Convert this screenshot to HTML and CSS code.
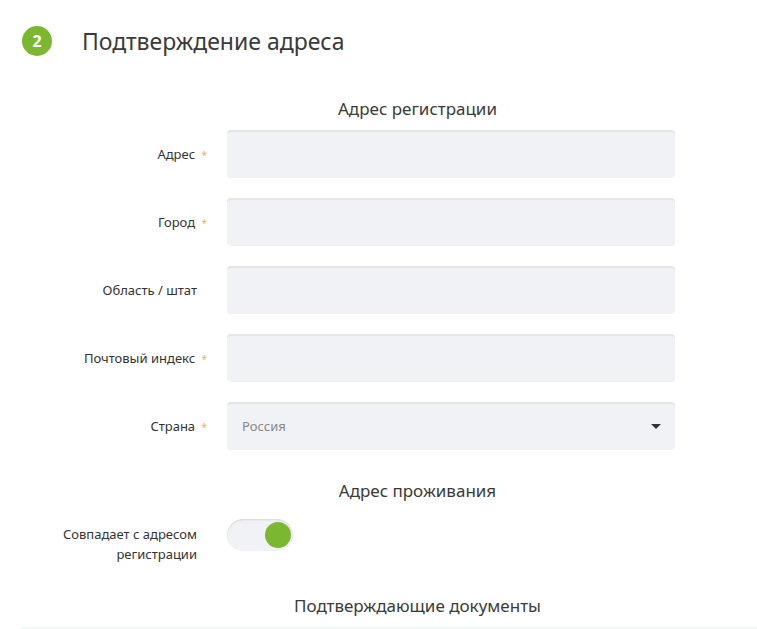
FILE: index.html
```html
<!DOCTYPE html>
<html lang="ru">
<head>
    <meta charset="UTF-8">
    <meta name="viewport" content="width=device-width, initial-scale=1.0">
    <title>Подтверждение адреса</title>
    <link rel="stylesheet" href="styles.css">
</head>
<body>

    <div class="step-header">
        <span class="step-badge">2</span>
        <h1>Подтверждение адреса</h1>
    </div>

    <form class="address-form">
        <h2 class="section-title">Адрес регистрации</h2>

        <div class="form-row">
            <label for="address">Адрес <span class="req">*</span></label>
            <input type="text" id="address">
        </div>

        <div class="form-row">
            <label for="city">Город <span class="req">*</span></label>
            <input type="text" id="city">
        </div>

        <div class="form-row">
            <label for="region">Область / штат</label>
            <input type="text" id="region">
        </div>

        <div class="form-row">
            <label for="zip">Почтовый индекс <span class="req">*</span></label>
            <input type="text" id="zip">
        </div>

        <div class="form-row">
            <label for="country">Страна <span class="req">*</span></label>
            <div class="select-box" id="country">
                <span>Россия</span>
                <span class="caret"></span>
            </div>
        </div>

        <h2 class="section-title second">Адрес проживания</h2>

        <div class="form-row toggle-row">
            <label>Совпадает с адресом регистрации</label>
            <div class="toggle"><span class="knob"></span></div>
        </div>

        <h2 class="section-title third">Подтверждающие документы</h2>
    </form>

    <div class="bottom-line"></div>

</body>
</html>
```

FILE: styles.css
```css
body {
    margin: 0;
    font-family: 'Noto Sans', 'Open Sans', sans-serif;
    color: #333;
    background: #fff;
}

.step-header {
    display: flex;
    align-items: center;
    padding: 26px 0 0 22px;
}

.step-badge {
    width: 30px;
    height: 30px;
    border-radius: 50%;
    background-color: #7cb82f;
    color: #fff;
    font-size: 16px;
    font-weight: bold;
    display: flex;
    align-items: center;
    justify-content: center;
}

h1 {
    margin: 0 0 0 30px;
    font-size: 23px;
    font-weight: normal;
    color: #3a3a3a;
    line-height: 30px;
}

.address-form {
    padding-top: 42px;
}

.section-title {
    margin: 0 0 10px;
    padding-left: 160px;
    width: 515px;
    text-align: center;
    font-size: 17px;
    font-weight: normal;
    line-height: 22px;
    color: #3a3a3a;
}

.section-title.second {
    margin-top: 30px;
    margin-bottom: 17px;
}

.section-title.third {
    margin-top: 31px;
}

.form-row {
    display: grid;
    grid-template-columns: 207px 448px;
    column-gap: 20px;
    align-items: center;
    margin-bottom: 20px;
}

.form-row label {
    text-align: right;
    padding-right: 10px;
    font-size: 13px;
    color: #333;
}

.req {
    color: #e6b462;
    font-size: 10px;
    margin-left: 3px;
    margin-right: -10px;
}

input[type="text"],
.select-box {
    box-sizing: border-box;
    height: 48px;
    width: 448px;
    border: none;
    border-radius: 4px;
    background-color: #f1f2f6;
    box-shadow: inset 0 2px 0 #e4e5e9;
    font-family: inherit;
    font-size: 13px;
    padding: 0 15px;
}

.select-box {
    display: flex;
    align-items: center;
    justify-content: space-between;
    color: #888;
    padding-right: 14px;
}

.caret {
    width: 0;
    height: 0;
    border-left: 5px solid transparent;
    border-right: 5px solid transparent;
    border-top: 5px solid #333;
}

.toggle-row {
    align-items: start;
    margin-bottom: 0;
}

.toggle-row label {
    line-height: 20px;
    padding-top: 5px;
    padding-left: 40px;
}

.toggle {
    box-sizing: border-box;
    width: 66px;
    height: 32px;
    border-radius: 16px;
    background-color: #f1f2f6;
    box-shadow: inset 0 1px 2px rgba(0,0,0,0.12);
    display: flex;
    align-items: center;
    justify-content: flex-end;
    padding-right: 2px;
}

.knob {
    width: 26px;
    height: 26px;
    border-radius: 50%;
    background-color: #7cb82f;
}

.bottom-line {
    margin: 9px 0 0 20px;
    height: 2px;
    background-color: #f0fbf8;
}
```
